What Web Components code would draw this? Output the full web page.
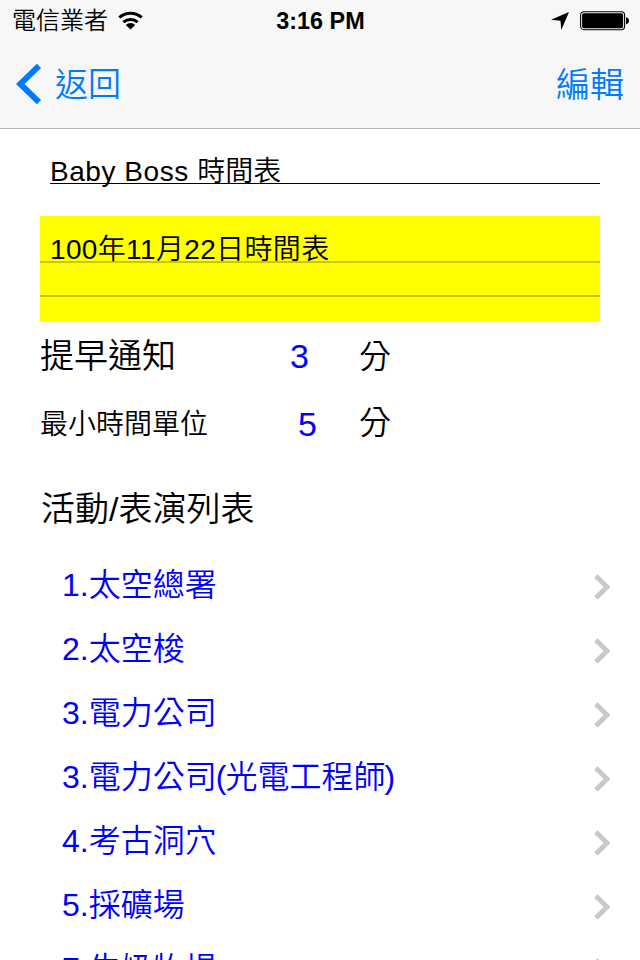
<!DOCTYPE html>
<html lang="zh-Hant">
<head>
<meta charset="utf-8">
<title>Baby Boss 時間表</title>
<style>
html,body{margin:0;height:960px;overflow:hidden;background:#fff}
</style>
</head>
<body>
<timetable-app></timetable-app>
<script>
const define = (name, html) => {
  const t = document.createElement('template');
  t.innerHTML = html;
  customElements.define(name, class extends HTMLElement {
    constructor() {
      super();
      this.attachShadow({mode: 'open'}).append(t.content.cloneNode(true));
    }
  });
};

define('status-bar', `
<style>
:host{display:grid;grid-template-columns:1fr auto 1fr;align-items:center;height:40px;padding:0 11px 0 12px;box-sizing:border-box;font-size:24px;line-height:40px;color:#000}
.left,.right{display:flex;align-items:center}
.left{gap:10px}
.left span{padding-top:1px}
.right{justify-content:flex-end;gap:11px}
.time{font-weight:700;font-size:23.4px}
svg{display:block}
</style>
<div class="left"><span>電信業者</span>
<svg width="26" height="20" viewBox="0 0 26 20"><g fill="none" stroke="#000" stroke-width="3"><path d="M1.3 6.5A16.8 16.8 0 0 1 23.7 6.5"/><path d="M5.4 11.2A10.8 10.8 0 0 1 19.6 11.2"/></g><path d="M12.5 18.6L7.8 14A6.4 6.4 0 0 1 17.2 14Z"/></svg></div>
<div class="time">3:16 PM</div>
<div class="right">
<svg width="18" height="18" viewBox="0 0 18 18"><path d="M18 0L10.3 18L9.5 8.7L0 7.8Z"/></svg>
<svg width="49" height="20" viewBox="0 0 49 20"><rect x=".6" y=".7" width="44" height="18" rx="3.4" fill="none" stroke="#000" stroke-width="1.1"/><rect x="2.1" y="2.2" width="41" height="15" rx="1.8"/><path d="M46 6.2Q49 7 49 9.7T46 13.2Z"/></svg>
</div>`);

define('nav-bar', `
<style>
:host{display:flex;justify-content:space-between;align-items:center;height:88px;padding:0 16px;box-sizing:border-box;font-size:34px;line-height:88px;color:#007aff}
.back{display:flex;align-items:center;gap:13px;font-size:33px}
svg{display:block}
::slotted(span){padding-top:2px}
</style>
<div class="back"><svg width="26" height="40" viewBox="0 0 26 40"><path d="M23 1.9L4.2 20L23 38.1" fill="none" stroke="#007aff" stroke-width="6"/></svg><slot name="back"></slot></div>
<slot name="action"></slot>`);

define('title-field', `
<style>
:host{display:block;margin:22px 40px 0 50px;height:32px;border-bottom:1px solid #000;font-size:28px;line-height:42px;white-space:nowrap}
</style><slot></slot>`);

define('note-pad', `
<style>
:host{display:block;margin:32px 40px 0;height:106px;padding:15px 10px 0;box-sizing:border-box;background:linear-gradient(#c8c800,#c8c800) 0 45px/100% 2px no-repeat,linear-gradient(#c8c800,#c8c800) 0 79px/100% 2px no-repeat,#ff0;font-size:28px;letter-spacing:.35px;line-height:38px;white-space:nowrap}
</style><slot></slot>`);

define('setting-row', `
<style>
:host{display:grid;grid-template-columns:var(--value-x,250px) 1fr;height:68px;margin-left:40px;line-height:68px;font-size:34px;white-space:nowrap}
.label{font-size:var(--label-size,34px);line-height:69px}
.value{display:grid;grid-template-columns:calc(319px - var(--value-x,250px)) 1fr}
.num{color:#00f}
.unit{font-size:32px;line-height:var(--unit-line,70px)}
</style>
<span class="label"><slot></slot></span>
<span class="value"><span class="num"><slot name="value"></slot></span><span class="unit"><slot name="unit"></slot></span></span>`);

define('section-title', `
<style>:host{display:block;margin:27px 0 0 41px;height:48px;line-height:48px;font-size:34px}</style><slot></slot>`);

define('activity-row', `
<style>
:host{display:flex;justify-content:space-between;align-items:center;height:64px;padding:0 30px 0 62px;line-height:60px;font-size:32px;color:#00f;white-space:nowrap}
.name{padding-bottom:4px}
svg{display:block}
</style><span class="name"><slot></slot></span>
<svg width="16" height="26" viewBox="0 0 16 26"><path d="M1.9 2L13 13L1.9 24" fill="none" stroke="#c7c7cc" stroke-width="4.8"/></svg>`);

define('timetable-app', `
<style>
:host{display:block;width:640px;height:960px;overflow:hidden;background:#fff;color:#000;font-family:"Liberation Sans","Noto Sans CJK TC DemiLight","Noto Sans CJK TC",sans-serif;font-weight:350}
header{background:#f7f7f7;border-bottom:1px solid #b2b2b2}
.list{margin-top:22px}
.small{--label-size:28px;--value-x:258px;--unit-line:67px}
.latin{letter-spacing:.55px}
.paren{letter-spacing:-1px}
</style>
<header><status-bar></status-bar><nav-bar><span slot="back">返回</span><span slot="action">編輯</span></nav-bar></header>
<title-field><span class="latin">Baby Boss </span>時間表</title-field>
<note-pad>100年11月22日時間表</note-pad>
<setting-row>提早通知<span slot="value">3</span><span slot="unit">分</span></setting-row>
<setting-row class="small">最小時間單位<span slot="value">5</span><span slot="unit">分</span></setting-row>
<section-title>活動/表演列表</section-title>
<div class="list">
<activity-row>1.太空總署</activity-row>
<activity-row>2.太空梭</activity-row>
<activity-row>3.電力公司</activity-row>
<activity-row>3.電力公<span class="paren">司(</span>光電工程<span class="paren">師)</span></activity-row>
<activity-row>4.考古洞穴</activity-row>
<activity-row>5.採礦場</activity-row>
<activity-row>7.牛奶牧場</activity-row>
</div>`);
</script>
</body>
</html>
